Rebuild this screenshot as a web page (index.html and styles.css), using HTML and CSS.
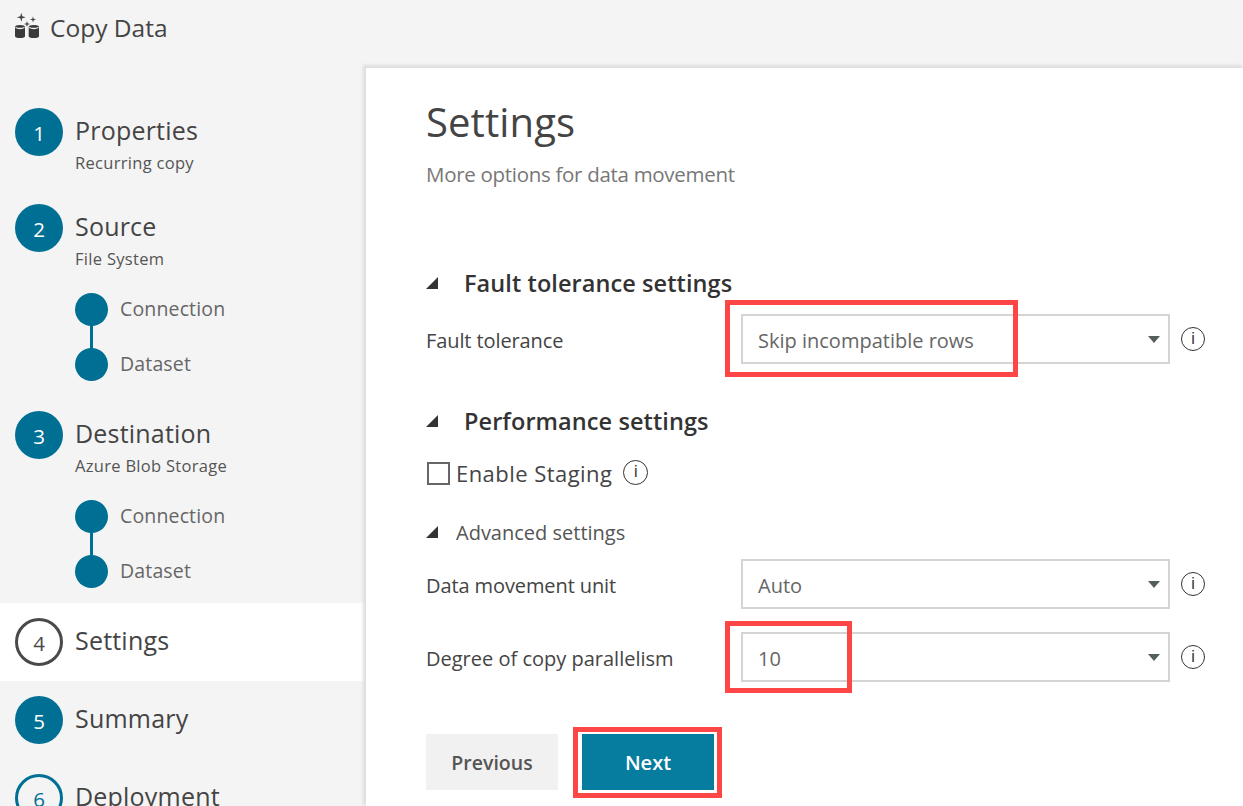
FILE: index.html
```html
<!DOCTYPE html>
<html lang="en">
<head>
    <meta charset="UTF-8">
    <title>Copy Data</title>
    <link rel="stylesheet" href="styles.css">
</head>
<body>
    <header class="topbar">
        <svg class="app-icon" width="26" height="28" viewBox="0 0 26 28">
            <path d="M6.300 -1.200 L7.300 2.300 L10.800 3.300 L7.300 4.300 L6.300 7.800 L5.300 4.300 L1.800 3.300 L5.300 2.300 Z" fill="#444"/>
            <path d="M18 2.500 L18.700 4.800 L21 5.500 L18.700 6.200 L18 8.500 L17.300 6.200 L15 5.500 L17.300 4.800 Z" fill="#444"/>
            <path d="M12 7 L12.700 9.300 L15 10 L12.700 10.700 L12 13 L11.300 10.700 L9 10 L11.300 9.300 Z" fill="#444"/>
            <path d="M0 13 Q0 11 5 11 Q10 11 10 13 V22 Q10 24 5 24 Q0 24 0 22 Z" fill="#3a3a3a"/>
            <path d="M0.500 13.500 Q5 15.500 9.500 13.500" stroke="#f4f4f4" stroke-width="1.300" fill="none"/>
            <path d="M13.700 13 Q13.700 11 18.800 11 Q24 11 24 13 V22 Q24 24 18.800 24 Q13.700 24 13.700 22 Z" fill="#3a3a3a"/>
            <path d="M14.200 13.500 Q18.800 15.500 23.500 13.500" stroke="#f4f4f4" stroke-width="1.300" fill="none"/>
        </svg>
        <span class="app-title">Copy Data</span>
    </header>

    <div class="layout">
        <nav class="sidebar">
            <div class="step step-first">
                <div class="circle">1</div>
                <div>
                    <div class="step-title">Properties</div>
                    <div class="step-sub">Recurring copy</div>
                </div>
            </div>
            <div class="step">
                <div class="circle">2</div>
                <div>
                    <div class="step-title">Source</div>
                    <div class="step-sub">File System</div>
                </div>
            </div>
            <div class="substeps">
                <div class="substep"><div class="dot"></div><span>Connection</span></div>
                <div class="substep"><div class="dot"></div><span>Dataset</span></div>
            </div>
            <div class="step">
                <div class="circle">3</div>
                <div>
                    <div class="step-title">Destination</div>
                    <div class="step-sub">Azure Blob Storage</div>
                </div>
            </div>
            <div class="substeps substeps-last">
                <div class="substep"><div class="dot"></div><span>Connection</span></div>
                <div class="substep"><div class="dot"></div><span>Dataset</span></div>
            </div>
            <div class="step-plain step-active">
                <div class="circle circle-current">4</div>
                <div class="step-title">Settings</div>
            </div>
            <div class="step-plain">
                <div class="circle">5</div>
                <div class="step-title">Summary</div>
            </div>
            <div class="step-plain">
                <div class="circle circle-todo">6</div>
                <div class="step-title">Deployment</div>
            </div>
        </nav>

        <main class="panel">
            <h1>Settings</h1>
            <p class="subtitle">More options for data movement</p>

            <div class="section-head section-fault">
                <span class="arrow"></span>
                <h2>Fault tolerance settings</h2>
            </div>
            <div class="row">
                <label>Fault tolerance</label>
                <div class="select">
                    <span>Skip incompatible rows</span>
                    <span class="caret"></span>
                    <div class="mark mark-fault"></div>
                </div>
                <span class="info">i</span>
            </div>

            <div class="section-head section-perf">
                <span class="arrow"></span>
                <h2>Performance settings</h2>
            </div>
            <div class="check-row">
                <span class="checkbox"></span>
                <span class="check-label">Enable Staging</span>
                <span class="info">i</span>
            </div>
            <div class="advanced">
                <span class="arrow"></span>
                <span>Advanced settings</span>
            </div>
            <div class="row">
                <label>Data movement unit</label>
                <div class="select">
                    <span>Auto</span>
                    <span class="caret"></span>
                </div>
                <span class="info">i</span>
            </div>
            <div class="row row-next">
                <label>Degree of copy parallelism</label>
                <div class="select">
                    <span>10</span>
                    <span class="caret"></span>
                    <div class="mark mark-degree"></div>
                </div>
                <span class="info">i</span>
            </div>

            <div class="buttons">
                <button class="btn">Previous</button>
                <button class="btn btn-primary">Next<span class="mark mark-next"></span></button>
            </div>
        </main>
    </div>
</body>
</html>
```

FILE: styles.css
```css
* {
    box-sizing: border-box;
}

body {
    margin: 0;
    height: 100vh;
    overflow: hidden;
    background-color: #f4f4f4;
    color: #444;
    font-family: "Open Sans", "Noto Sans", sans-serif;
    display: flex;
    flex-direction: column;
}

.topbar {
    height: 68px;
    flex-shrink: 0;
    display: flex;
    align-items: flex-start;
    padding: 14px 0 0 15px;
}

.app-icon {
    margin-right: 9px;
    overflow: visible;
}

.app-title {
    font-size: 24.500px;
    line-height: 30px;
    margin-top: -1px;
}

.layout {
    flex: 1;
    display: flex;
    min-height: 0;
}

.sidebar {
    width: 366px;
    flex-shrink: 0;
}

.step {
    display: flex;
    align-items: flex-start;
    height: 89px;
    padding-left: 15px;
}

.step-first {
    margin-top: 40px;
    height: 96px;
}

.circle {
    width: 48px;
    height: 48px;
    border-radius: 50%;
    flex-shrink: 0;
    margin-right: 12px;
    padding-top: 2px;
    background-color: #006f94;
    color: #fff;
    font-size: 20.500px;
    display: flex;
    align-items: center;
    justify-content: center;
}

.circle-current {
    background-color: #fff;
    border: 3px solid #4a4a4a;
    color: #4a4a4a;
}

.circle-todo {
    background-color: transparent;
    border: 3px solid #006f94;
    color: #006f94;
}

.step-title {
    font-size: 25px;
    line-height: 34px;
    letter-spacing: 0.200px;
    color: #444;
}

.step-sub {
    font-size: 16.500px;
    line-height: 24px;
    letter-spacing: 0.300px;
    margin-top: 4px;
    color: #555;
}

.step > div:last-child {
    margin-top: 5px;
}

.substeps {
    height: 118px;
    padding-left: 75px;
    position: relative;
}

.substeps-last {
    height: 103px;
}

.substeps::before {
    content: "";
    position: absolute;
    left: 90px;
    top: 16px;
    width: 3px;
    height: 55px;
    background-color: #006f94;
}

.substep {
    display: flex;
    align-items: center;
    height: 33px;
    margin-bottom: 22px;
    font-size: 19.500px;
    letter-spacing: 0.150px;
    color: #666;
}

.substep span {
    margin-top: -2px;
}

.dot {
    width: 33px;
    height: 33px;
    border-radius: 50%;
    background-color: #006f94;
    margin-right: 12px;
}

.step-plain {
    display: flex;
    align-items: center;
    height: 78px;
    padding-left: 15px;
}

.step-plain .step-title {
    margin-top: -4px;
}

.step-active {
    background-color: #fff;
}

.panel {
    flex: 1;
    background-color: #fff;
    box-shadow: -2px -2px 3px 1px #dedede;
    padding: 24px 0 0 60px;
    color: #444;
}

h1 {
    margin: 0;
    font-size: 40px;
    font-weight: 400;
    line-height: 60px;
    letter-spacing: 0.100px;
}

.subtitle {
    margin: 7px 0 0;
    font-size: 20.500px;
    line-height: 30px;
    letter-spacing: -0.300px;
    color: #777;
}

.section-head {
    display: flex;
    align-items: center;
    height: 34px;
}

.section-fault {
    margin-top: 77px;
}

.section-perf {
    margin-top: 40px;
}

h2 {
    margin: 0;
    font-size: 23.500px;
    font-weight: 600;
    letter-spacing: 0.080px;
    color: #333;
}

.arrow {
    width: 0;
    height: 0;
    border-style: solid;
    border-width: 0 0 12px 12px;
    border-color: transparent transparent #333 transparent;
    margin-right: 26px;
    flex-shrink: 0;
}

.row {
    display: flex;
    align-items: center;
    height: 50px;
    margin-top: 14px;
}

.row-next {
    margin-top: 23px;
}

.row label {
    width: 315px;
    padding-top: 2px;
    font-size: 20px;
    letter-spacing: -0.100px;
    color: #444;
}

.row-next label {
    letter-spacing: 0;
}

.select {
    position: relative;
    width: 429px;
    height: 50px;
    border: 2px solid #d4d4d4;
    padding: 2px 0 0 15px;
    display: flex;
    align-items: center;
    font-size: 20px;
    letter-spacing: 0;
    color: #666;
}

.caret {
    position: absolute;
    right: 8px;
    top: 20px;
    width: 0;
    height: 0;
    border-style: solid;
    border-width: 7px 6.500px 0 6.500px;
    border-color: #555e5e transparent transparent transparent;
}

.info {
    width: 24px;
    height: 24px;
    border: 1.500px solid #333;
    border-radius: 50%;
    margin: 0 0 0 11px;
    font-family: "Liberation Sans", sans-serif;
    font-size: 16px;
    line-height: 21px;
    text-align: center;
    color: #333;
}

.mark {
    position: absolute;
    border: 5px solid #ff4646;
    pointer-events: none;
}

.mark-fault {
    left: -18px;
    top: -16px;
    width: 293px;
    height: 77px;
}

.mark-degree {
    left: -18px;
    top: -13px;
    width: 127px;
    height: 72px;
}

.mark-next {
    left: -9px;
    top: -7px;
    width: 149px;
    height: 71px;
}

.check-row {
    display: flex;
    align-items: center;
    height: 30px;
    margin-top: 20px;
}

.checkbox {
    width: 23px;
    height: 23px;
    border: 2px solid #666;
    margin-left: 1px;
    margin-right: 6px;
}

.check-label {
    font-size: 22px;
    letter-spacing: 0.450px;
    color: #444;
}

.check-row .info {
    width: 25px;
    height: 25px;
    margin-left: 11px;
    margin-top: -2px;
}

.advanced {
    display: flex;
    align-items: center;
    height: 30px;
    margin-top: 29px;
    font-size: 20px;
    color: #555;
}

.advanced .arrow {
    margin-right: 18px;
}

.advanced + .row {
    margin-top: 12px;
}

.buttons {
    display: flex;
    gap: 24px;
    margin-top: 52px;
}

.btn {
    position: relative;
    width: 132px;
    height: 56px;
    border: 0;
    background-color: #f1f1f1;
    color: #555;
    font-family: inherit;
    font-size: 19.500px;
    font-weight: 600;
    letter-spacing: 0;
}

.btn-primary {
    background-color: #067c9f;
    color: #fff;
    font-size: 20px;
}
```
